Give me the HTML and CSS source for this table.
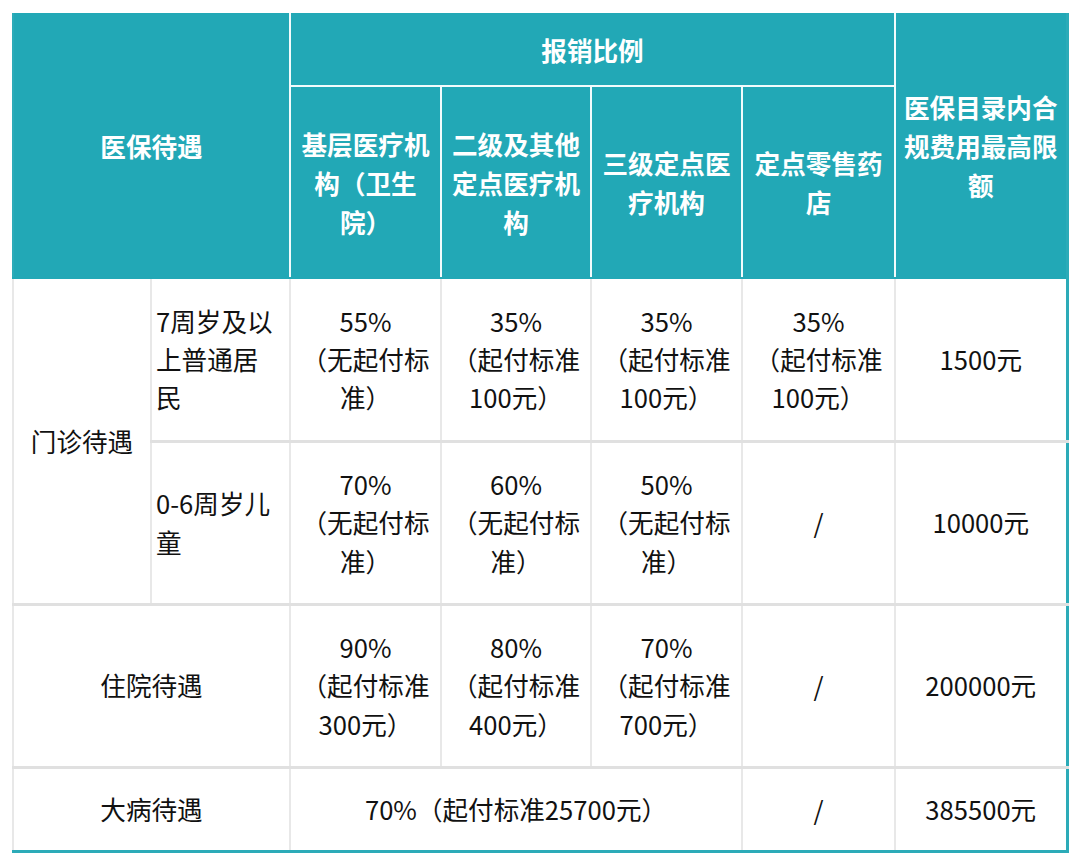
FILE: index.html
```html
<!DOCTYPE html>
<html lang="zh-CN">
<head>
<meta charset="utf-8">
<title>医保待遇</title>
<link rel="stylesheet" href="styles.css">
</head>
<body>
<table class="benefit">
  <colgroup>
    <col class="c1"><col class="c2"><col class="c3"><col class="c4"><col class="c5"><col class="c6"><col class="c7">
  </colgroup>
  <thead>
    <tr class="h1">
      <th colspan="2" rowspan="2">医保待遇</th>
      <th colspan="4">报销比例</th>
      <th rowspan="2">医保目录内合规费用最高限额</th>
    </tr>
    <tr class="h2">
      <th>基层医疗机构（卫生院）</th>
      <th>二级及其他定点医疗机构</th>
      <th>三级定点医疗机构</th>
      <th>定点零售药店</th>
    </tr>
  </thead>
  <tbody>
    <tr class="row">
      <td rowspan="2">门诊待遇</td>
      <td class="left">7周岁及以上普通居民</td>
      <td>55%<br>（无起付标准）</td>
      <td>35%<br>（起付标准100元）</td>
      <td>35%<br>（起付标准100元）</td>
      <td>35%<br>（起付标准100元）</td>
      <td>1500元</td>
    </tr>
    <tr class="row">
      <td class="left">0-6周岁儿童</td>
      <td>70%<br>（无起付标准）</td>
      <td>60%<br>（无起付标准）</td>
      <td>50%<br>（无起付标准）</td>
      <td>/</td>
      <td>10000元</td>
    </tr>
    <tr class="row">
      <td colspan="2">住院待遇</td>
      <td>90%<br>（起付标准300元）</td>
      <td>80%<br>（起付标准400元）</td>
      <td>70%<br>（起付标准700元）</td>
      <td>/</td>
      <td>200000元</td>
    </tr>
    <tr class="row last">
      <td colspan="2">大病待遇</td>
      <td colspan="3">70%（起付标准25700元）</td>
      <td>/</td>
      <td>385500元</td>
    </tr>
  </tbody>
</table>
</body>
</html>
```

FILE: styles.css
```css
html, body {
  margin: 0;
  padding: 0;
  background: #ffffff;
}
body {
  padding: 13px 0 0 12px;
  font-family: "Noto Sans CJK SC", "Noto Sans", sans-serif;
}
.benefit {
  border-collapse: collapse;
  table-layout: fixed;
  width: 1054px;
  font-size: 25.6px;
  line-height: 38.4px;
  color: #111111;
  border-left: 2px solid #2cabb8;
  border-right: 3px solid #2cabb8;
  border-bottom: 3px solid #2cabb8;
}
.c1 { width: 138px; }
.c2 { width: 139px; }
.c3 { width: 151px; }
.c4 { width: 150px; }
.c5 { width: 151px; }
.c6 { width: 153px; }
.c7 { width: 172px; }

.benefit th {
  background: #22a8b6;
  color: #ffffff;
  font-weight: 700;
  text-align: center;
  vertical-align: middle;
  padding: 0 5px;
  border: 2px solid #f2fbfc;
  border-top: none;
  line-height: 39px;
}
.benefit thead tr.h2 th,
.benefit thead tr.h1 th[rowspan] {
  border-bottom: 2px solid #22a8b6;
}
.benefit thead tr.h1 th:first-child { border-left: none; }
.benefit thead tr.h1 th:last-child { border-right: none; }
.h1 { height: 73px; }
.h2 { height: 192px; }

.benefit td {
  text-align: center;
  vertical-align: middle;
  padding: 0 5px;
  border-left: 2px solid #e8e8e8;
  border-right: 2px solid #e8e8e8;
  border-top: 3px solid #e0e0e0;
}
.benefit tbody tr:first-child td { border-top: none; }
.benefit td.left {
  text-align: left;
  padding: 0 15px 0 4px;
}
.row { height: 163px; }
.row.last { height: 84px; }
```
